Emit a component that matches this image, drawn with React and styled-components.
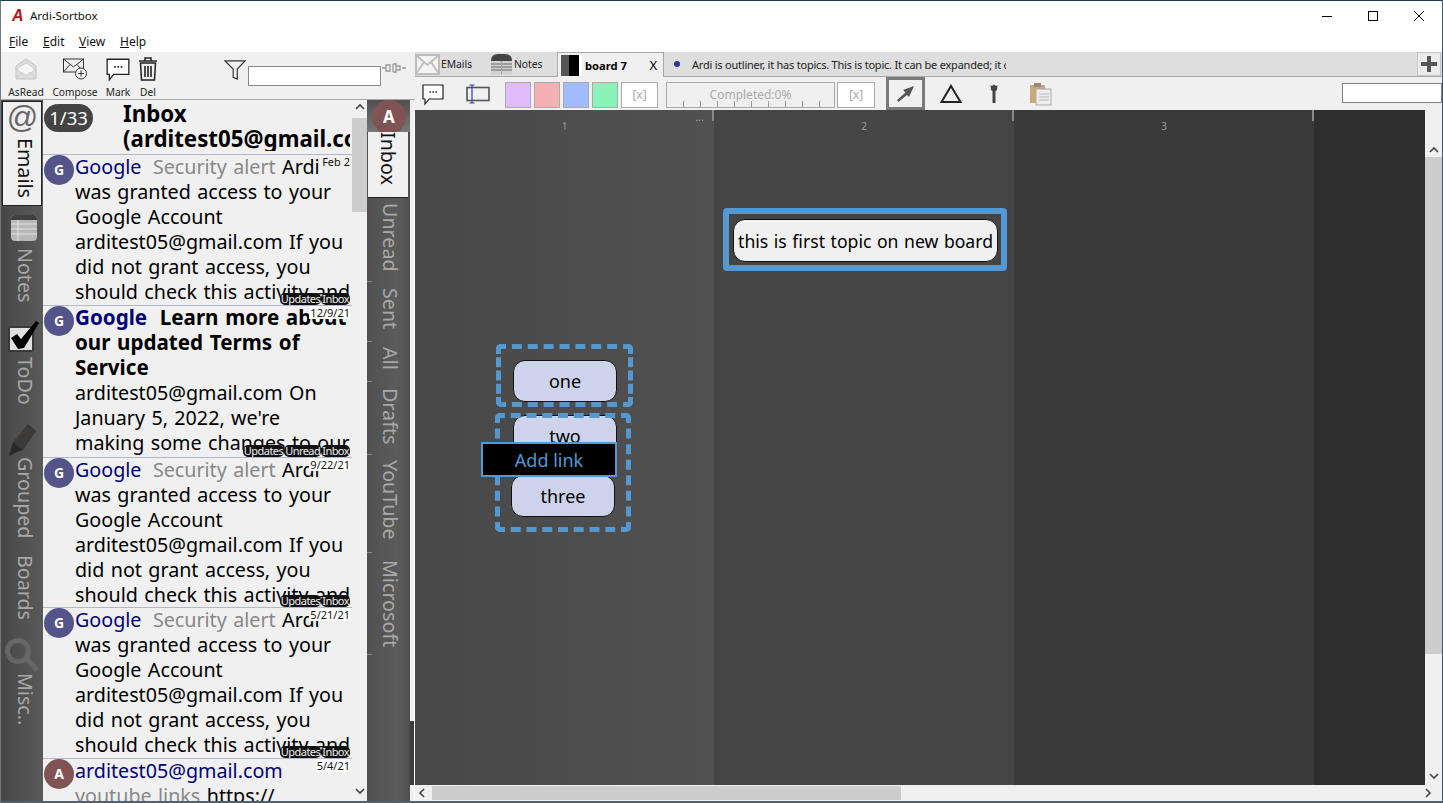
import React from "react";
import styled, { createGlobalStyle } from "styled-components";

const Global = createGlobalStyle`
  html, body { margin: 0; padding: 0; background: #fff; }
  * { box-sizing: border-box; }
  body { font-family: "Noto Sans", "Open Sans", sans-serif; }
  svg { display: block; }
`;

const Frame = styled.div`
  width: 1443px; height: 803px; overflow: hidden; display: flex; flex-direction: column;
  border-top: 1px solid #1d3a52; border-left: 1px solid #6a7a88; border-right: 1px solid #45586a;
  border-bottom: 2px solid #50606e; background: #fff; color: #000;
`;
const TitleBar = styled.div`
  height: 29px; flex: none; display: flex; align-items: center; background: #fff; position: relative;
`;
const Logo = styled.span`
  width: 29px; padding-left: 11px; color: #b8121b; font: italic bold 16px "Liberation Sans", sans-serif;
`;
const TitleText = styled.span`font-size: 11.5px; color: #111;`;
const WindowButtons = styled.div`margin-left: auto; display: flex; align-items: center;`;
const WinBtn = styled.div`width: 46px; height: 29px; display: flex; align-items: center; justify-content: center;`;
const MenuBar = styled.div`height: 22px; flex: none; display: flex; align-items: center; padding-left: 8px; background: #fff;`;
const MenuItem = styled.span`
  font-size: 12px; color: #111; width: ${p => p.$w}px;
  &::first-letter { text-decoration: underline; }
`;
const Main = styled.div`flex: 1; min-height: 0; display: flex;`;

const LeftPane = styled.div`width: 414px; flex: none; display: flex; flex-direction: column;`;
const TopTools = styled.div`
  height: 48px; flex: none; background: #f0f0f0; border-bottom: 1px solid #a8a8a8; display: flex; padding-left: 5px;
`;
const ToolBtn = styled.div`
  width: ${p => p.$w}px; display: flex; flex-direction: column; align-items: center; font-size: 10.2px; color: #222; line-height: 14px; padding-top: 4px; flex: none;
  svg { height: 26px; margin-bottom: 3px; flex: none; }
`;
const FilterWrap = styled.div`display: flex; align-items: flex-start; margin-left: 60px; padding-top: 8px;`;
const FilterInput = styled.div`
  width: 133px; height: 20px; background: #fff; border: 1px solid #8a8a8a; margin-left: 2px; margin-top: 6px;
`;
const PlugWrap = styled.div`margin-top: 2px; margin-left: 1px;`;
const PaneBody = styled.div`flex: 1; min-height: 0; display: flex;`;

const SideTabs = styled.div`
  width: 42px; flex: none; background: linear-gradient(90deg, #474747, #5a5a5a); display: flex; flex-direction: column; padding-top: 1px; overflow: hidden;
`;
const SideTab = styled.div`
  height: ${p => p.$h}px; flex: none; display: flex; flex-direction: column; align-items: center; justify-content: ${p => p.$end ? "flex-end" : "flex-start"};
  width: ${p => p.$active ? "40px" : "42px"}; margin-left: ${p => p.$active ? "1px" : "0"};
  background: ${p => p.$active ? "#f0f0f0" : "transparent"};
  border: ${p => p.$active ? "1px solid #222" : "none"};
  padding-bottom: ${p => p.$pb || 0}px;
`;
const SideIcon = styled.div`margin-bottom: ${p => p.$mb || 0}px; margin-left: ${p => p.$ml || 0}px;`;
const VLabel = styled.span`
  writing-mode: vertical-rl; font-size: 19.7px; line-height: 26px; color: ${p => p.$active ? "#111" : "#a8a8a8"}; white-space: nowrap;
  margin-left: ${p => p.$ml || 0}px;
`;
const AtSign = styled.span`
  font: italic 31px/30px "Liberation Sans", sans-serif; color: #666; height: 36px; padding-top: 1px;
`;

const EmailList = styled.div`
  width: 324px; flex: none; display: flex; background: #f0f0f0; overflow: hidden;
`;
const ListContent = styled.div`width: 309px; flex: none; display: flex; flex-direction: column; overflow: hidden;`;
const ListHead = styled.div`height: 54px; flex: none; position: relative; padding-left: 80px; overflow: hidden;`;
const CountBadge = styled.div`
  position: absolute; left: 1px; top: 4px; width: 49px; height: 28px; background: #444; color: #fff; border-radius: 14px;
  font-size: 18.5px; line-height: 28px; text-align: center;
`;
const HeadTitle = styled.div`
  font-size: 22.3px; font-weight: 700; line-height: 25px; width: 227px; overflow: hidden; white-space: pre; padding-top: 1px;
`;
const Row = styled.div`
  height: ${p => p.$h}px; flex: none; position: relative; padding-left: 32px; border-top: 1px solid #b3b6cf; overflow: hidden;
  font-size: 19.7px; line-height: 25px; word-spacing: 1.3px;
`;
const Avatar = styled.div`
  position: absolute; left: ${p => p.$l ?? 1}px; top: ${p => p.$t ?? 0}px; width: ${p => p.$s || 30}px; height: ${p => p.$s || 30}px; border-radius: 50%;
  background: ${p => p.$bg}; color: #fff; font: bold ${p => p.$fs || 14}px/${p => p.$s || 30}px "Noto Sans", sans-serif; text-align: center; word-spacing: 0;
`;
const RowBody = styled.div`width: 277px; margin-top: -1px; font-weight: ${p => p.$bold ? 700 : 400}; font-size: ${p => p.$bold ? 20.6 : 19.7}px;`;
const Sender = styled.span`color: #00007a;`;
const Subject = styled.span`color: ${p => p.$bold ? "#000" : "#888"}; margin-left: ${p => p.$flush ? 0 : p.$bold ? 6 : 5}px;`;
const BodyPart = styled.span`font-weight: 400; font-size: 19.7px; color: #000;`;
const DateTag = styled.div`
  position: absolute; right: 2px; top: 0; font-size: 11px; line-height: 13px; padding-left: 1px; color: #111; background: ${p => p.$plain ? "transparent" : "#fff"}; word-spacing: 0;
`;
const Tags = styled.div`position: absolute; right: 2px; bottom: 0; display: flex;`;
const Tag = styled.span`
  height: 12px; background: #111; color: #eee; border-radius: 5px; font-size: 11px; line-height: 12px; padding: 0 1px; letter-spacing: -0.55px;
`;
const ScrollV = styled.div`
  width: ${p => p.$w || 15}px; flex: none; background: #f0f0f0; position: relative;
`;
const Thumb = styled.div`
  position: absolute; left: 0; right: 0; top: ${p => p.$t}px; height: ${p => p.$h}px; background: #cdcdcd;
`;
const ChevronBox = styled.div`
  position: absolute; left: 0; right: 0; top: ${p => p.$t}px; display: flex; justify-content: center;
`;

const FolderTabs = styled.div`
  width: 43px; flex: none; background: linear-gradient(90deg, #505050, #5c5c5c 70%, #4e4e4e); display: flex; flex-direction: column; position: relative; overflow: hidden;
`;
const FolderHead = styled.div`
  height: 32px; flex: none; background: linear-gradient(#4f4f4f, #777); position: relative; overflow: hidden;
`;
const FolderTab = styled.div`
  height: ${p => p.$h}px; flex: none; width: ${p => p.$active ? "40px" : "43px"}; margin-left: ${p => p.$active ? "1px" : "0"};
  background: ${p => p.$active ? "#f0f0f0" : "transparent"}; border-bottom: ${p => p.$active ? "1px solid #222" : "none"};
  display: flex; align-items: flex-start; justify-content: center; padding-top: ${p => p.$pt || 0}px; padding-left: ${p => p.$active ? 0 : 2}px; position: relative;
  ${p => p.$tick ? `&::after { content: ""; position: absolute; left: 0; bottom: 0; width: 5px; height: 1px; background: #888; }` : ""}
`;
const Splitter = styled.div`width: 4px; flex: none; background: #f0f0f0; display: flex; flex-direction: column;`;
const SplitterDark = styled.div`margin-top: 621px; height: 64px; background: #3c3c3c;`;

const RightPane = styled.div`flex: 1; min-width: 0; display: flex; flex-direction: column;`;
const TabBar = styled.div`
  height: 25px; flex: none; background: #dedede; border-bottom: 1px solid #a9a9a9; display: flex; position: relative;
`;
const FlatTab = styled.div`
  width: ${p => p.$w}px; flex: none; display: flex; align-items: center; font-size: 10.3px; gap: 1px; color: #222;
`;
const ActiveTab = styled.div`
  width: 107px; height: 25px; flex: none; background: #f0f0f0; border: 1px solid #a9a9a9; border-bottom: none; display: flex; align-items: center; padding-left: 3px; font-size: 12px; position: relative;
`;
const BoardTabName = styled.span`font-weight: 700; font-size: 11.2px; margin-left: 3px;`;
const CloseX = styled.span`position: absolute; right: 6px; top: 4px; font-size: 13px; line-height: 16px;`;
const LongTab = styled.div`
  display: flex; align-items: center; padding-left: 10px; width: 342px; overflow: hidden; white-space: nowrap; font-size: 11px; color: #222; letter-spacing: -0.22px;
`;
const Dot = styled.span`width: 6px; height: 6px; background: #33339a; border-radius: 50%; margin-right: 12px; flex: none;`;
const PlusBtn = styled.div`
  position: absolute; right: 1px; top: 0; width: 24px; height: 24px; background: #ececec; border: 1px solid #c4c4c4; display: flex; align-items: center; justify-content: center;
`;
const BoardTools = styled.div`
  height: 33px; flex: none; background: #f0f0f0; display: flex; align-items: center; padding-left: 5px; position: relative;
`;
const ToolIcon = styled.div`
  width: ${p => p.$w}px; flex: none; margin-left: ${p => p.$ml || 0}px; display: flex; justify-content: center; align-items: center;
`;
const Swatch = styled.div`
  width: 26px; height: 26px; flex: none; background: ${p => p.$c}; border: 1px solid #aaa; margin-right: 3px; margin-top: 3px;
`;
const XBox = styled.div`
  width: ${p => p.$w}px; height: 26px; flex: none; background: #fff; border: 1px solid #aaa; color: #aaa; font-size: 12px; line-height: 24px; text-align: center; margin-left: ${p => p.$ml || 0}px; margin-top: 3px;
`;
const Progress = styled.div`
  width: 169px; height: 26px; flex: none; margin-left: 8px; margin-top: 3px; border: 1px solid #aaa; position: relative; color: #aaa; font-size: 12px; line-height: 24px; text-align: center;
  background: repeating-linear-gradient(90deg, transparent 0 16px, #999 16px 17px) bottom / 100% 6px no-repeat;
`;
const SelectedTool = styled.div`
  width: 39px; height: 33px; flex: none; margin-left: 11px; border: 3px solid #7a7a7a; display: flex; align-items: center; justify-content: center;
`;
const SearchBox = styled.div`
  position: absolute; right: 0; top: 6px; width: 100px; height: 20px; background: #fff; border: 1px solid #808080;
`;
const BoardRow = styled.div`flex: 1; min-height: 0; display: flex;`;
const Board = styled.div`width: 1010px; flex: none; display: flex; position: relative; overflow: hidden;`;
const Column = styled.div`
  width: ${p => p.$w}px; flex: none; background: ${p => p.$bg}; position: relative; text-align: center; color: #999; font-size: 10px; padding-top: 10px; line-height: 12px;
  ${p => p.$tick ? `&::after { content: ""; position: absolute; right: 0; top: 0; width: 2px; height: 11px; background: #8a8a8a; }` : ""}
`;
const Dots = styled.span`position: absolute; right: 10px; top: 2px; color: #aaa; font-size: 11px; line-height: 10px;`;
const HScroll = styled.div`height: 16px; flex: none; background: #f0f0f0; position: relative;`;
const HThumb = styled.div`position: absolute; left: 17px; top: 1px; bottom: 1px; width: 469px; background: #cdcdcd;`;
const HArrow = styled.div`position: absolute; top: 3px; ${p => p.$right ? "right: 8px" : "left: 3px"};`;

const Placed = styled.div`
  position: absolute; left: ${p => p.$x}px; top: ${p => p.$y}px; width: ${p => p.$w}px; height: ${p => p.$h}px;
`;
const TopicFrame = styled(Placed)`border: 6px solid #5398d0; border-radius: 4px; background: #444;`;
const DashFrame = styled(Placed)`border: 5px dashed #5398d0; border-radius: 5px;`;
const Node = styled(Placed)`
  background: ${p => p.$bg || "#cdd3ea"}; border: 1px solid #111; border-radius: 12px; color: #000; font-size: ${p => p.$fs || 18}px; word-spacing: ${p => p.$ws || 0}px; display: flex; align-items: center; justify-content: center; white-space: nowrap;
`;
const LinkLabel = styled(Placed)`
  background: #000; border: 2px solid #5398d0; color: #5398d0; font-size: 18px; display: flex; align-items: center; justify-content: center;
`;

const Chevron = ({ dir = "up" }) => {
  const d = { up: "M1 6 L5 2 L9 6", down: "M1 2 L5 6 L9 2", left: "M6 1 L2 5 L6 9", right: "M2 1 L6 5 L2 9" }[dir];
  return <svg width="10" height="10" viewBox="0 0 10 10"><path d={d} fill="none" stroke="#444" strokeWidth="1.6" /></svg>;
};

const Envelope = () => (
  <svg width="28" height="26" viewBox="0 0 28 26">
    <path d="M4 10 L14 3 L24 10 V23 H4 Z" fill="#dcdcdc" stroke="#c4c4c4" />
    <path d="M6 12 L14 7 L22 12 L22 15 L14 19 L6 15 Z" fill="#f6f6f6" stroke="#cfcfcf" />
    <path d="M4 23 L11 16 M24 23 L17 16" stroke="#cfcfcf" />
  </svg>
);
const Compose = () => (
  <svg width="26" height="26" viewBox="0 0 26 26" fill="none" stroke="#333" strokeWidth="1">
    <rect x="1.5" y="3" width="20" height="13" />
    <path d="M1.5 3 L11.5 11 L21.5 3 M1.5 16 L8 8.5 M21.5 16 L15 8.5" />
    <circle cx="19" cy="17.5" r="5.5" fill="#f0f0f0" />
    <path d="M19 14.5 V20.5 M16 17.5 H22" />
  </svg>
);
const Bubble = ({ w = 24, h = 24 }) => (
  <svg width={w} height={h} viewBox="0 0 24 24" fill="none" stroke="#222" strokeWidth="1.2">
    <path d="M2 3 H22 V17 H8 L4 22 V17 H2 Z" fill="#fff" />
    <path d="M8.5 10 h1.5 M11.5 10 h1.5 M14.5 10 h1.5" strokeWidth="1.5" />
  </svg>
);
const Trash = () => (
  <svg width="22" height="26" viewBox="0 0 22 26" fill="none" stroke="#222" strokeWidth="1.5">
    <path d="M2 5 H20 M8 5 V2 H14 V5" />
    <path d="M3.5 7 H18.5 L17.5 24 H4.5 Z" />
    <path d="M8 10 V21 M11 10 V21 M14 10 V21" strokeWidth="1.6" />
  </svg>
);
const Funnel = () => (
  <svg width="22" height="20" viewBox="0 0 24 22" fill="none" stroke="#333" strokeWidth="1.3">
    <path d="M1 1 H23 L14.5 10 V21 L10 19 V10 Z" />
  </svg>
);
const Plug = () => (
  <svg width="24" height="12" viewBox="0 0 24 12" fill="none" stroke="#999" strokeWidth="1.3">
    <path d="M0 6 H4 M20 6 H24 M4 3 H8 V9 H4 Z M11 2 V10 M11 2 H14 V10 H11 M14 4 H18 V8 H14" />
  </svg>
);
const MailTab = () => (
  <svg width="25" height="21" viewBox="0 0 25 21" fill="none">
    <rect x="1" y="1" width="23" height="19" fill="#f4f4f4" stroke="#bdbdbd" strokeWidth="2" />
    <path d="M1 1 L12.5 11 L24 1 M1 20 L9 8 M24 20 L16 8" stroke="#bdbdbd" strokeWidth="1.8" />
  </svg>
);
const NotesTabIcon = () => (
  <svg width="23" height="22" viewBox="0 0 23 22">
    <path d="M1 22 V8 Q1 1 8 1 H15 Q22 1 22 8 V22 Z" fill="#d2d2d2" />
    <path d="M1 8 Q1 1 8 1 H15 Q22 1 22 8 Z" fill="#444" />
    <path d="M1 11 H22 M1 14 H22 M1 17 H22" stroke="#666" />
    <path d="M11.5 8 V22" stroke="#aaa" />
  </svg>
);
const NotesSideIcon = () => (
  <svg width="28" height="28" viewBox="0 0 28 28">
    <rect x="1" y="1" width="26" height="26" rx="4" fill="#b8b8b8" />
    <path d="M1 5 a4 4 0 0 1 4 -4 h18 a4 4 0 0 1 4 4 v1 h-26 z" fill="#404040" />
    <path d="M1 10 H27 M1 15 H27 M1 20 H27 M8 6 V27" stroke="#e2e2e2" strokeWidth="1" />
  </svg>
);
const CheckIcon = () => (
  <svg width="32" height="32" viewBox="0 0 32 32">
    <rect x="2" y="6" width="24" height="24" rx="1.5" fill="#e0e0e0" stroke="#3a3a3a" strokeWidth="2" />
    <path d="M4 17 L10 13 L14 18 L29 0 L32 2 L17 27 L11 28 Z" fill="#000" />
  </svg>
);
const Marker = () => (
  <svg width="30" height="34" viewBox="0 0 30 34">
    <path d="M21 1 L29 8 L16 27 L6 19 Z" fill="#3d3a3a" />
    <path d="M6 19 L16 27 L10 29 L2 33 L4 26 Z" fill="#2a2828" />
  </svg>
);
const Glass = () => (
  <svg width="36" height="36" viewBox="0 0 36 36" fill="none" stroke="#666">
    <circle cx="14" cy="14" r="10.5" strokeWidth="5" />
    <path d="M23 22 L33 33" strokeWidth="5" />
  </svg>
);
const SplitIcon = () => (
  <svg width="21" height="21" viewBox="0 0 21 21"><rect width="8" height="21" fill="#555" /><rect x="8" width="10" height="21" fill="#000" /><rect x="18" width="3" height="21" fill="#fff" /></svg>
);
const ResizeIcon = () => (
  <svg width="24" height="20" viewBox="0 0 24 20" fill="none">
    <rect x="1" y="3.5" width="22" height="13" stroke="#555" strokeWidth="1.6" />
    <path d="M6 1 V19 M3.5 1 H8.5 M3.5 19 H8.5" stroke="#3a3aaa" strokeWidth="1.2" />
  </svg>
);
const Arrow = () => (
  <svg width="22" height="20" viewBox="0 0 22 20"><path d="M2 16 L3.5 18 L12 11 L14 13 L19 2 L8 6 L10.5 8.5 Z" fill="#555" /></svg>
);
const Triangle = () => (
  <svg width="22" height="20" viewBox="0 0 22 20"><path d="M11 2 L20.5 18 H1.5 Z" fill="none" stroke="#222" strokeWidth="2" /></svg>
);
const Pin = () => (
  <svg width="8" height="20" viewBox="0 0 8 20"><path d="M0.5 1 L2 2 L4 0.5 L6 2 L7.5 1 L7 6 L5.5 7 V19 H2.5 V7 L1 6 Z" fill="#444" /></svg>
);
const Clipboard = () => (
  <svg width="24" height="24" viewBox="0 0 24 24">
    <rect x="1" y="3" width="15" height="18" rx="1" fill="#c8a878" />
    <rect x="5" y="1" width="7" height="4" fill="#9a8a70" />
    <rect x="7" y="7" width="15" height="16" fill="#ececec" stroke="#aaa" />
    <path d="M10 12 H20 M10 15 H20 M10 18 H20" stroke="#bbb" />
  </svg>
);

const security = "Ardi was granted access to your Google Account arditest05@gmail.com If you did not grant access, you should check this activity and";
const emails = [
  { h: 151, a: "G", bg: "#54548a", sender: "Google", subject: "Security alert", body: security, date: "Feb 2", plain: true, tags: ["Updates", "Inbox"] },
  { h: 152, a: "G", bg: "#54548a", sender: "Google", subject: "Learn more about our updated Terms of Service", bold: true, body: "arditest05@gmail.com On January 5, 2022, we're making some changes to our", date: "12/9/21", tags: ["Updates", "Unread", "Inbox"] },
  { h: 150, a: "G", bg: "#54548a", sender: "Google", subject: "Security alert", body: security, date: "9/22/21", tags: ["Updates", "Inbox"] },
  { h: 151, a: "G", bg: "#54548a", sender: "Google", subject: "Security alert", body: security, date: "5/21/21", tags: ["Updates", "Inbox"] },
  { h: 44, a: "A", bg: "#805355", sender: "arditest05@gmail.com", subject: "youtube links", flush: true, body: "https://", date: "5/4/21", tags: [] },
];
const folders = [
  { name: "Unread", h: 84, pt: 5 }, { name: "Sent", h: 60, pt: 6 }, { name: "All", h: 40, pt: 5 },
  { name: "Drafts", h: 73, pt: 6 }, { name: "YouTube", h: 98, pt: 5 }, { name: "Microsoft", h: 102, pt: 7 },
];

export default function App() {
  return (
    <Frame>
      <Global />
      <TitleBar>
        <Logo>A</Logo>
        <TitleText>Ardi-Sortbox</TitleText>
        <WindowButtons>
          <WinBtn><svg width="12" height="12" viewBox="0 0 12 12"><path d="M1 6.5 H11" stroke="#000" /></svg></WinBtn>
          <WinBtn><svg width="12" height="12" viewBox="0 0 12 12"><rect x="1.5" y="1.5" width="9" height="9" fill="none" stroke="#000" /></svg></WinBtn>
          <WinBtn><svg width="12" height="12" viewBox="0 0 12 12"><path d="M1 1 L11 11 M11 1 L1 11" stroke="#000" /></svg></WinBtn>
        </WindowButtons>
      </TitleBar>
      <MenuBar>
        <MenuItem $w={34}>File</MenuItem>
        <MenuItem $w={36}>Edit</MenuItem>
        <MenuItem $w={41}>View</MenuItem>
        <MenuItem $w={40}>Help</MenuItem>
      </MenuBar>
      <Main>
        <LeftPane>
          <TopTools>
            <ToolBtn $w={40}><Envelope />AsRead</ToolBtn>
            <ToolBtn $w={58}><Compose />Compose</ToolBtn>
            <ToolBtn $w={28}><Bubble w={26} h={26} />Mark</ToolBtn>
            <ToolBtn $w={32}><Trash />Del</ToolBtn>
            <FilterWrap>
              <Funnel />
              <FilterInput />
              <PlugWrap><Plug /></PlugWrap>
            </FilterWrap>
          </TopTools>
          <PaneBody>
            <SideTabs>
              <SideTab $active $h={105}>
                <AtSign>@</AtSign>
                <VLabel $active $ml={6}>Emails</VLabel>
              </SideTab>
              <SideTab $h={103} $end $pb={6}><SideIcon $mb={6} $ml={3}><NotesSideIcon /></SideIcon><VLabel $ml={6}>Notes</VLabel></SideTab>
              <SideTab $h={101} $end $pb={5}><SideIcon $mb={4} $ml={2}><CheckIcon /></SideIcon><VLabel $ml={6}>ToDo</VLabel></SideTab>
              <SideTab $h={131} $end $pb={3}><SideIcon><Marker /></SideIcon><VLabel $ml={6}>Grouped</VLabel></SideTab>
              <SideTab $h={84} $end $pb={5}><VLabel $ml={6}>Boards</VLabel></SideTab>
              <SideTab $h={103} $end $pb={3}><SideIcon><Glass /></SideIcon><VLabel $ml={6}>Misc..</VLabel></SideTab>
            </SideTabs>
            <EmailList>
              <ListContent>
                <ListHead>
                  <CountBadge>1/33</CountBadge>
                  <HeadTitle>{"Inbox\n(arditest05@gmail.com)"}</HeadTitle>
                </ListHead>
                {emails.map((m, i) => (
                  <Row key={i} $h={m.h}>
                    <Avatar $bg={m.bg}>{m.a}</Avatar>
                    <RowBody $bold={m.bold}>
                      <Sender>{m.sender}</Sender> <Subject $bold={m.bold} $flush={m.flush}>{m.subject}</Subject>{" "}
                      <BodyPart>{m.body}</BodyPart>
                    </RowBody>
                    <DateTag $plain={m.plain}>{m.date}</DateTag>
                    {m.tags.length > 0 && <Tags>{m.tags.map(t => <Tag key={t}>{t}</Tag>)}</Tags>}
                  </Row>
                ))}
              </ListContent>
              <ScrollV>
                <ChevronBox $t={3}><Chevron dir="up" /></ChevronBox>
                <Thumb $t={18} $h={94} />
                <ChevronBox $t={687}><Chevron dir="down" /></ChevronBox>
              </ScrollV>
            </EmailList>
            <FolderTabs>
              <FolderHead><Avatar $bg="#805355" $s={34} $fs={17} $l={5} $t={0}>A</Avatar></FolderHead>
              <FolderTab $active $h={66} $pt={0}><VLabel $active>Inbox</VLabel></FolderTab>
              {folders.map(f => (
                <FolderTab key={f.name} $h={f.h} $pt={f.pt} $tick><VLabel>{f.name}</VLabel></FolderTab>
              ))}
            </FolderTabs>
            <Splitter><SplitterDark /></Splitter>
          </PaneBody>
        </LeftPane>
        <RightPane>
          <TabBar>
            <FlatTab $w={75}><MailTab />EMails</FlatTab>
            <FlatTab $w={67}><NotesTabIcon />Notes</FlatTab>
            <ActiveTab><SplitIcon /><BoardTabName>board 7</BoardTabName><CloseX>X</CloseX></ActiveTab>
            <LongTab><Dot />Ardi is outliner, it has topics. This is topic. It can be expanded; it can</LongTab>
            <PlusBtn>
              <svg width="18" height="18" viewBox="0 0 18 18"><path d="M9 1 V17 M1 9 H17" stroke="#555" strokeWidth="4" /></svg>
            </PlusBtn>
          </TabBar>
          <BoardTools>
            <ToolIcon $w={26}><Bubble w={26} h={24} /></ToolIcon>
            <ToolIcon $w={24} $ml={20}><ResizeIcon /></ToolIcon>
            <ToolIcon $w={15} />
            <Swatch $c="#e0bcff" />
            <Swatch $c="#f4b0b4" />
            <Swatch $c="#a0bcff" />
            <Swatch $c="#88f4b8" />
            <XBox $w={37}>[x]</XBox>
            <Progress>Completed:0%</Progress>
            <XBox $w={38} $ml={2}>[x]</XBox>
            <SelectedTool><Arrow /></SelectedTool>
            <ToolIcon $w={22} $ml={15}><Triangle /></ToolIcon>
            <ToolIcon $w={8} $ml={28}><Pin /></ToolIcon>
            <ToolIcon $w={24} $ml={31}><Clipboard /></ToolIcon>
            <SearchBox />
          </BoardTools>
          <BoardRow>
            <Board>
              <Column $w={299} $bg="linear-gradient(90deg, #484848, #515151)" $tick>1<Dots>...</Dots></Column>
              <Column $w={300} $bg="#454545" $tick>2</Column>
              <Column $w={300} $bg="#3a3a3a" $tick>3</Column>
              <Column $w={111} $bg="#2e2e2e" />
              <TopicFrame $x={308} $y={98} $w={284} $h={63} />
              <Node $bg="#f0f0f0" $fs={17.6} $ws={1} $x={318} $y={109} $w={265} $h={43}>this is first topic on new board</Node>
              <Node $x={98} $y={250} $w={104} $h={42}>one</Node>
              <Node $x={98} $y={305} $w={104} $h={42}>two</Node>
              <Node $x={96} $y={365} $w={104} $h={42}>three</Node>
              <DashFrame $x={81} $y={234} $w={137} $h={63} />
              <DashFrame $x={80} $y={303} $w={136} $h={119} />
              <LinkLabel $x={66} $y={332} $w={136} $h={35}>Add link</LinkLabel>
            </Board>
            <ScrollV $w={17}>
              <ChevronBox $t={36}><Chevron dir="up" /></ChevronBox>
              <Thumb $t={47} $h={497} />
              <ChevronBox $t={662}><Chevron dir="down" /></ChevronBox>
            </ScrollV>
          </BoardRow>
          <HScroll>
            <HArrow><Chevron dir="left" /></HArrow>
            <HThumb />
            <HArrow $right><Chevron dir="right" /></HArrow>
          </HScroll>
        </RightPane>
      </Main>
    </Frame>
  );
}
